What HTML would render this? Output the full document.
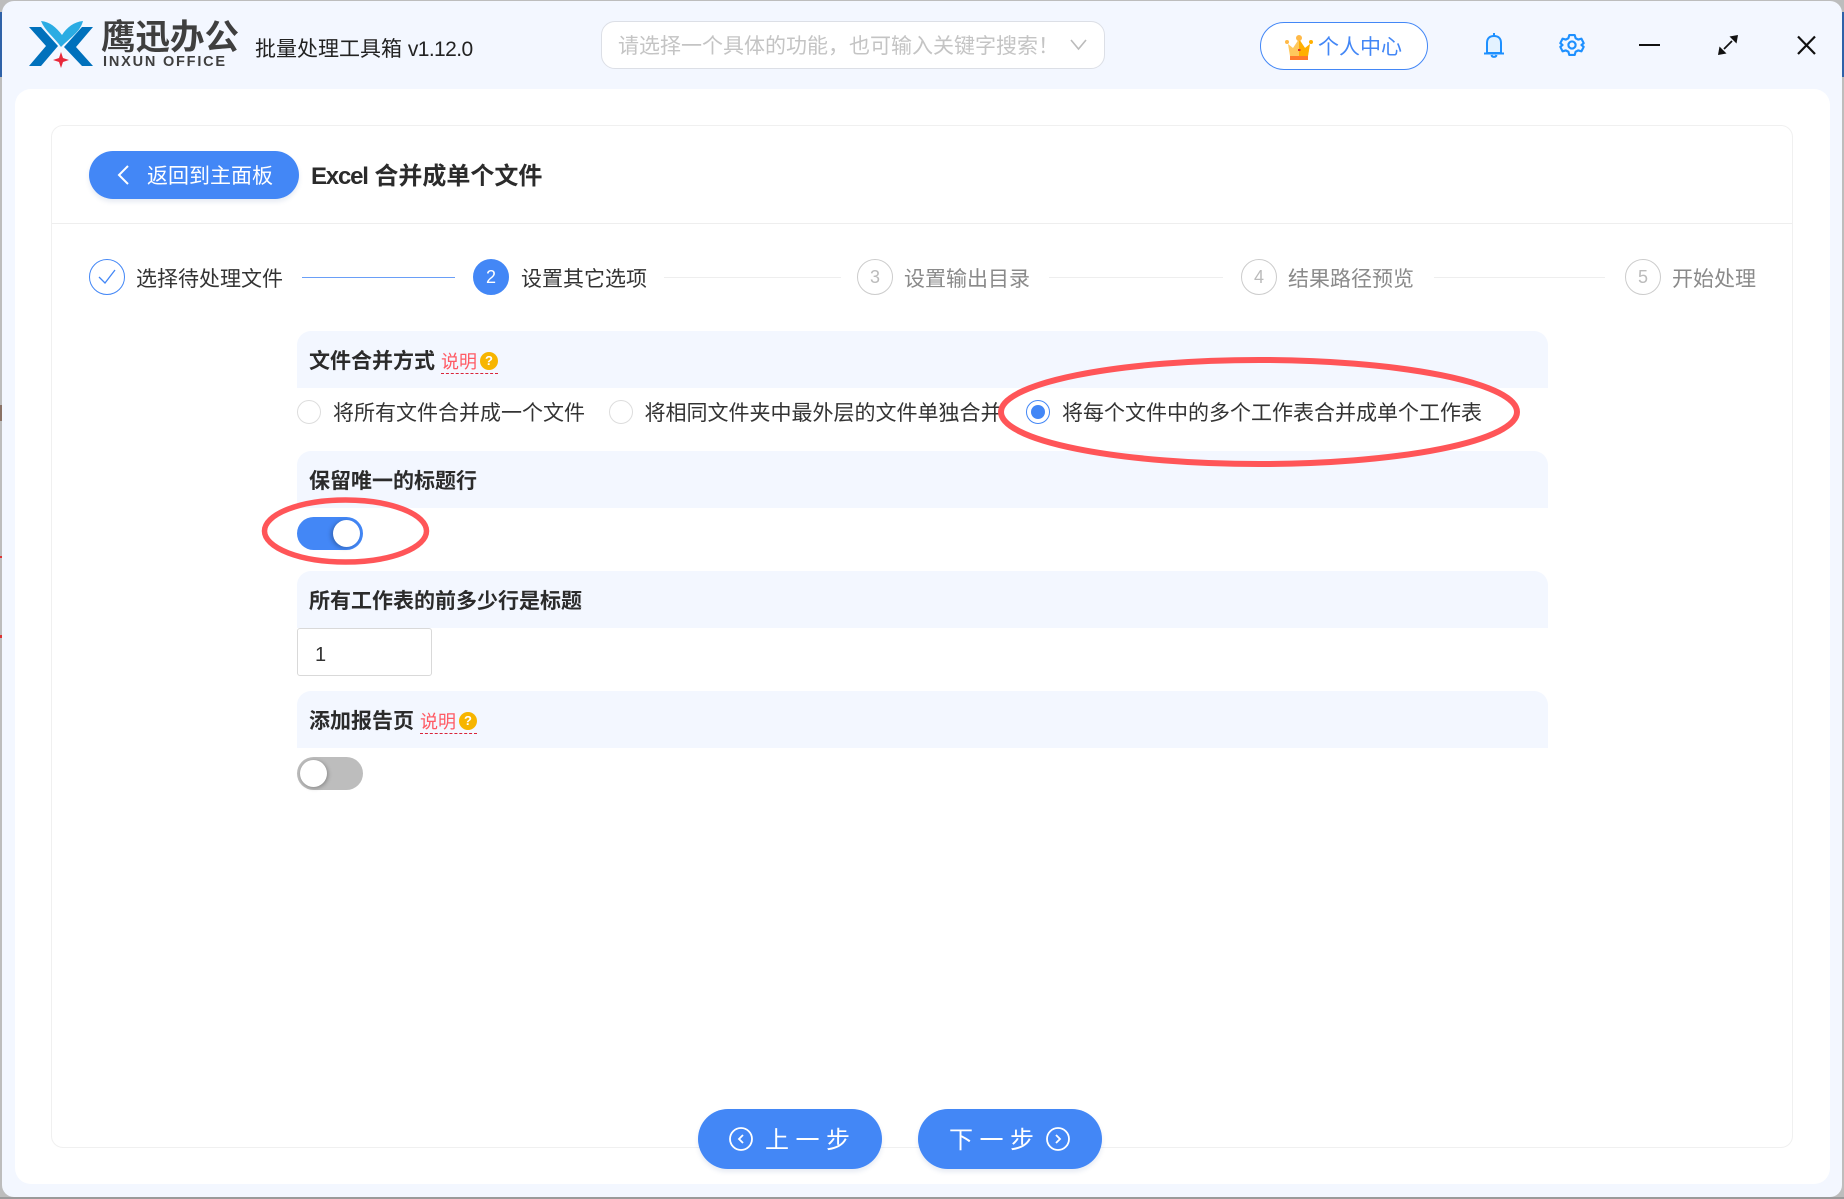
<!DOCTYPE html>
<html><head><meta charset="utf-8"><style>
html,body{margin:0;padding:0;width:1844px;height:1199px;overflow:hidden;background:#bdbdbd}
*{box-sizing:border-box}
body{font-family:"Liberation Sans","Noto Sans CJK SC",sans-serif;color:#333;position:relative}
.a{position:absolute}
.t{position:absolute;white-space:nowrap;line-height:30px;height:30px;font-size:21px}
.b{font-weight:700;color:#2b2b2b}
.hd{position:absolute;left:297px;width:1251px;height:57px;background:#f3f7ff;border-radius:14px 14px 0 0}
.c{position:absolute;width:36px;height:36px;border-radius:50%;top:259px;border:1px solid #ccc;color:#bbb;text-align:center;line-height:34px;font-size:18px}
.l{position:absolute;height:1px;top:277px;background:#eeeeee}
.r{position:absolute;width:24px;height:24px;border-radius:50%;border:1.5px solid #ddd;top:400px;background:#fff}
.q{position:absolute;width:18px;height:18px;border-radius:50%;background:#f7b500;color:#fff;font-size:13px;line-height:18px;text-align:center;font-weight:700}
.u{position:absolute;height:0;border-top:1px dashed #d9243a}
.sm{position:absolute;white-space:nowrap;font-size:18px;line-height:24px;color:#ff5a64}
.btn{position:absolute;background:#4387f6;border-radius:30px;box-shadow:0 3px 5px rgba(60,90,160,.12)}
</style></head><body>
<div class="a" style="left:0;top:12px;width:2px;height:65px;background:#2f62a8"></div>
<div class="a" style="left:0;top:405px;width:2px;height:16px;background:#8a7266"></div>
<div class="a" style="left:0;top:556px;width:2px;height:2px;background:#d33"></div>
<div class="a" style="left:0;top:635px;width:2px;height:3px;background:#d33"></div>
<div class="a" style="left:1842px;top:12px;width:2px;height:65px;background:#2f62a8"></div>
<div class="a" style="left:2px;top:1px;width:1840px;height:1196px;background:#f3f7ff;border-radius:12px"></div>
<div class="a" style="left:0;top:1197px;width:1844px;height:2px;background:#9a9a9a"></div>

<svg class="a" style="left:0;top:0" width="110" height="80" viewBox="0 0 110 80">
<path d="M29 27H41L58 46 41 66H29L46 46Z" fill="#0071bc"/>
<path d="M93 27H82L64 47 82 66H93L76 47Z" fill="#0071bc"/>
<path d="M41 21C50 22 56 27 62 35C67 27 74 22 83 21C80 32 72 36 61 47C54 37 45 31 41 21Z" fill="#2bace3"/>
<path d="M61 52L63 58 69 60 63 62 61 68 59 62 53 60 59 58Z" fill="#e8283a"/>
</svg>
<div class="t" style="left:101px;top:17px;font-size:34.500px;line-height:42px;height:42px;font-weight:700;color:#3f3f3f">鹰迅办公</div>
<div class="t" style="left:103px;top:52px;font-size:14.500px;line-height:20px;height:20px;font-weight:700;letter-spacing:1.800px;color:#3f3f3f">INXUN OFFICE</div>
<div class="t" style="left:255px;top:35px;color:#222">批量处理工具箱 <span style="letter-spacing:-.6px">v1.12.0</span></div>

<div class="a" style="left:601px;top:21px;width:504px;height:48px;background:#fff;border:1.5px solid #dcdfe6;border-radius:14px"></div>
<div class="t" style="left:618px;top:32px;color:#c4c4c4">请选择一个具体的功能，也可输入关键字搜索！</div>
<svg class="a" style="left:1068px;top:36px" width="22" height="18"><path d="M3 4L10.5 13 18 4" fill="none" stroke="#bbb" stroke-width="1.6"/></svg>

<div class="a" style="left:1260px;top:22px;width:168px;height:48px;background:#fff;border:1.5px solid #4387f6;border-radius:24px"></div>
<svg class="a" style="left:1283px;top:33px" width="32" height="30" viewBox="0 0 32 30">
<path d="M5 11L10 15 16 6 22 15 27 11 25 23H7Z" fill="#ffc85c"/>
<path d="M16 6L22 15 27 11 25 23H16Z" fill="#ffb000"/>
<circle cx="4" cy="9" r="2" fill="#ffb947"/><circle cx="28" cy="9" r="2" fill="#ffb000"/><circle cx="16" cy="5" r="3" fill="#ffb947"/>
<rect x="7" y="23" width="18" height="4" fill="#ff7a2b"/><rect x="15" y="16" width="2.5" height="2" fill="#d8342a"/>
</svg>
<div class="t" style="left:1318px;top:33px;color:#4387f6">个人中心</div>

<svg class="a" style="left:1481px;top:30px" width="26" height="30" viewBox="0 0 26 30">
<path d="M6 23V13C6 8 9 6 13 6S20 8 20 13V23Z" fill="#e3f2ff" stroke="#1e90ff" stroke-width="2"/>
<path d="M3 23.5H23" stroke="#1e90ff" stroke-width="2"/><path d="M13 3V6" stroke="#1e90ff" stroke-width="2"/>
<path d="M10.5 25C11 27.5 15 27.5 15.5 25" fill="none" stroke="#1e90ff" stroke-width="2"/>
</svg>
<svg class="a" style="left:1558px;top:30px" width="28" height="30" viewBox="0 0 28 30">
<g transform="translate(1.400 1.500) scale(.9)"><path d="M11 4H17L18 7.5 21 9 24.5 8 27 13 24.5 15 27 17 24.5 22 21 21 18 22.5 17 26H11L10 22.500 7 21 3.500 22 1 17 3.500 15 1 13 3.500 8 7 9 10 7.500Z" fill="none" stroke="#1e90ff" stroke-width="2.400" stroke-linejoin="round"/>
<circle cx="14" cy="15" r="4" fill="none" stroke="#1e90ff" stroke-width="2.400"/></g>
</svg>
<div class="a" style="left:1639px;top:44px;width:21px;height:2px;background:#111"></div>
<svg class="a" style="left:1716px;top:33px" width="24" height="24" viewBox="0 0 24 24">
<path d="M8 16L16 8" stroke="#111" stroke-width="1.800"/><path d="M22 2L13.500 3.500 20.500 10.500Z" fill="#111"/><path d="M2 22L10.500 20.500 3.500 13.500Z" fill="#111"/>
</svg>
<svg class="a" style="left:1795px;top:34px" width="22" height="22" viewBox="0 0 22 22"><path d="M3 2.500L20 20M20 2.500L3 20" stroke="#111" stroke-width="2.200"/></svg>

<div class="a" style="left:15px;top:89px;width:1815px;height:1095px;background:#fff;border-radius:16px"></div>
<div class="a" style="left:51px;top:125px;width:1742px;height:1023px;border:1px solid #f0f0f0;border-radius:12px"></div>
<div class="a" style="left:52px;top:223px;width:1740px;height:1px;background:#eee"></div>

<div class="btn" style="left:89px;top:151px;width:210px;height:48px;border-radius:24px"></div>
<svg class="a" style="left:115px;top:163px" width="18" height="24"><path d="M13 3L4 12 13 21" fill="none" stroke="#fff" stroke-width="2"/></svg>
<div class="t" style="left:147px;top:162px;color:#fff">返回到主面板</div>
<div class="t b" style="left:311px;top:161px;font-size:24px;line-height:32px;height:32px"><span style="letter-spacing:-1.200px">Excel</span> 合并成单个文件</div>

<div class="c" style="left:89px;border-color:#4387f6"></div>
<svg class="a" style="left:96px;top:267px" width="22" height="20"><path d="M3 10L9 16 19 3" fill="none" stroke="#4387f6" stroke-width="1.300"/></svg>
<div class="t" style="left:136px;top:265px">选择待处理文件</div>
<div class="l" style="left:302px;width:153px;background:#6a9ff7"></div>
<div class="c" style="left:473px;background:#4387f6;border-color:#4387f6;color:#fff">2</div>
<div class="t" style="left:521px;top:265px">设置其它选项</div>
<div class="l" style="left:664px;width:177px"></div>
<div class="c" style="left:857px">3</div>
<div class="t" style="left:904px;top:265px;color:#8a8a8a">设置输出目录</div>
<div class="l" style="left:1049px;width:174px"></div>
<div class="c" style="left:1241px">4</div>
<div class="t" style="left:1288px;top:265px;color:#8a8a8a">结果路径预览</div>
<div class="l" style="left:1434px;width:171px"></div>
<div class="c" style="left:1625px">5</div>
<div class="t" style="left:1672px;top:265px;color:#8a8a8a">开始处理</div>

<div class="hd" style="top:331px"></div>
<div class="t b" style="left:309px;top:347px">文件合并方式</div>
<div class="sm" style="left:441px;top:350px">说明</div><div class="q" style="left:480px;top:352px">?</div>
<div class="u" style="left:441px;top:373px;width:57px"></div>

<div class="r" style="left:297px"></div>
<div class="t" style="left:333px;top:399px">将所有文件合并成一个文件</div>
<div class="r" style="left:609px"></div>
<div class="t" style="left:644.500px;top:399px">将相同文件夹中最外层的文件单独合并</div>
<div class="r" style="left:1026px;border-color:#4387f6"></div>
<div class="a" style="left:1031px;top:405px;width:14px;height:14px;border-radius:50%;background:#4387f6"></div>
<div class="t" style="left:1062px;top:399px">将每个文件中的多个工作表合并成单个工作表</div>

<div class="hd" style="top:451px"></div>
<div class="t b" style="left:309px;top:467px">保留唯一的标题行</div>
<div class="a" style="left:297px;top:517px;width:66px;height:33px;border-radius:17px;background:#4387f6"></div>
<div class="a" style="left:333px;top:520px;width:27px;height:27px;border-radius:50%;background:#fff;box-shadow:-2px 1px 4px rgba(0,0,0,.25)"></div>

<div class="hd" style="top:571px"></div>
<div class="t b" style="left:309px;top:587px">所有工作表的前多少行是标题</div>
<div class="a" style="left:297px;top:628px;width:135px;height:48px;border:1.500px solid #d9d9d9;border-radius:3px;background:#fff"></div>
<div class="t" style="left:315px;top:640px;font-size:20px">1</div>

<div class="hd" style="top:691px"></div>
<div class="t b" style="left:309px;top:707px">添加报告页</div>
<div class="sm" style="left:420px;top:710px">说明</div><div class="q" style="left:459px;top:712px">?</div>
<div class="u" style="left:420px;top:733px;width:57px"></div>
<div class="a" style="left:297px;top:757px;width:66px;height:33px;border-radius:17px;background:#bdbdbd"></div>
<div class="a" style="left:300px;top:760px;width:27px;height:27px;border-radius:50%;background:#fff;box-shadow:1px 1px 4px rgba(0,0,0,.3)"></div>

<svg class="a" style="left:0;top:0;pointer-events:none" width="1844" height="1199">
<ellipse cx="1259" cy="412" rx="258" ry="52" fill="none" stroke="#ff5558" stroke-width="6"/>
<ellipse cx="345.500" cy="531" rx="81" ry="31" fill="none" stroke="#ff5558" stroke-width="5.500"/>
</svg>

<div class="btn" style="left:698px;top:1109px;width:184px;height:60px"></div>
<svg class="a" style="left:728px;top:1126px" width="26" height="26"><circle cx="13" cy="13" r="11" fill="none" stroke="#fff" stroke-width="1.800"/><path d="M15 9L11 13 15 17" fill="none" stroke="#fff" stroke-width="1.800"/></svg>
<div class="t" style="left:765px;top:1124px;font-size:24px;line-height:34px;height:34px;letter-spacing:6.500px;color:#fff">上一步</div>
<div class="btn" style="left:918px;top:1109px;width:184px;height:60px"></div>
<div class="t" style="left:949px;top:1124px;font-size:24px;line-height:34px;height:34px;letter-spacing:6.500px;color:#fff">下一步</div>
<svg class="a" style="left:1045px;top:1126px" width="26" height="26"><circle cx="13" cy="13" r="11" fill="none" stroke="#fff" stroke-width="1.800"/><path d="M11 9L15 13 11 17" fill="none" stroke="#fff" stroke-width="1.800"/></svg>
</body></html>
